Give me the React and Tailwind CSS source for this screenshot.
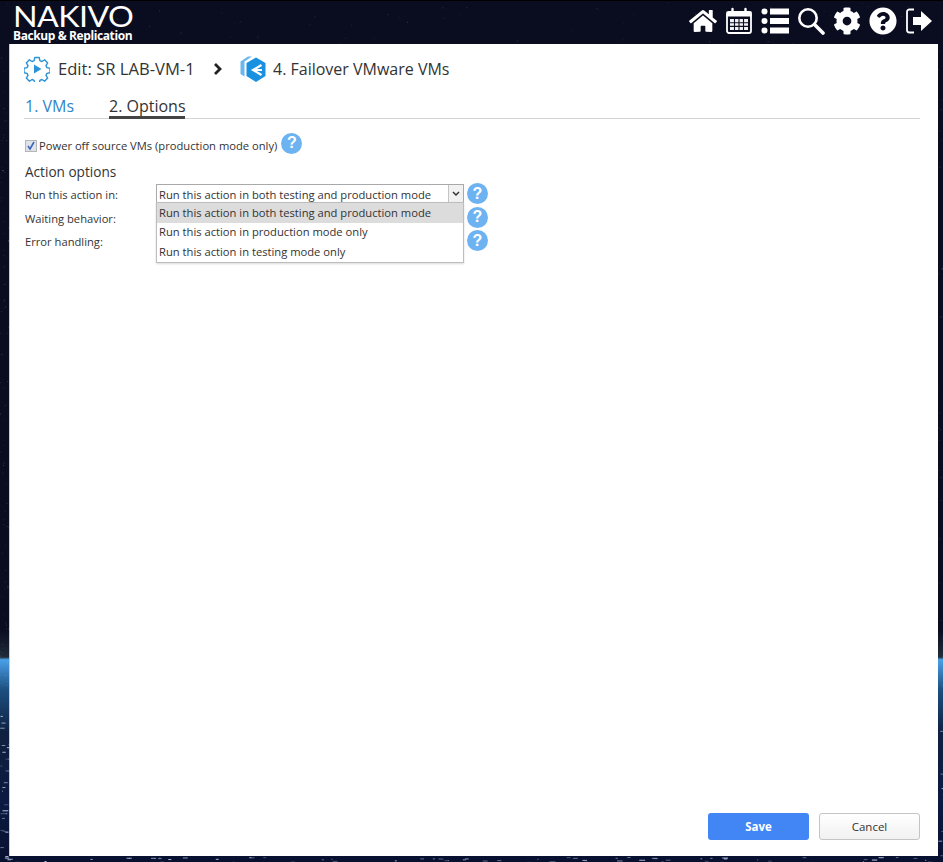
import React from "react";
import { FaHome, FaCog, FaQuestionCircle } from "react-icons/fa";

const font = "font-['Open_Sans','Liberation_Sans',sans-serif]";

function Stars() {
  const pts = [];
  let s = 7;
  const r = () => { s = (s * 9301 + 49297) % 233280; return s / 233280; };
  for (let i = 0; i < 300; i++) {
    const side = r();
    const x = side < 0.35 ? r() * 9 : side < 0.5 ? 938 + r() * 5 : r() * 943;
    const y = side < 0.5 ? 44 + r() * 818 : side < 0.7 ? 1 + r() * 43 : 856 + r() * 6;
    const low = y > 700;
    pts.push({ x, y, w: low ? 1 + r() * 5 : 1, o: low ? 0.25 + r() * 0.6 : 0.08 + r() * 0.15 });
  }
  return (
    <svg className="absolute inset-0" width="943" height="862">
      {pts.map((p, i) => (
        <rect key={i} x={p.x} y={p.y} width={p.w} height="1" fill="#cfe0ff" opacity={p.o} />
      ))}
    </svg>
  );
}

function Help({ className = "" }) {
  return (
    <span className={`flex h-[21px] w-[21px] shrink-0 items-center justify-center rounded-full bg-[#6db3f2] font-['Liberation_Sans',sans-serif] text-[16px] leading-none font-bold text-white ${className}`}>
      ?
    </span>
  );
}

function Calendar() {
  return (
    <svg width="28" height="28" viewBox="0 0 28 28" fill="none" stroke="#fff">
      <rect x="2" y="5" width="24" height="21" rx="2" strokeWidth="1.800" />
      <rect x="2" y="5" width="24" height="4" fill="#fff" strokeWidth="1" />
      <path d="M7.500 2v5M20.500 2v5" strokeWidth="2.400" strokeLinecap="round" />
      <path d="M5 12h18v11H5z" fill="#fff" stroke="none" opacity=".95" />
      <path d="M9.500 12v11M14 12v11M18.500 12v11M5 15.700h18M5 19.400h18" stroke="#0a0c20" strokeWidth="1.100" />
    </svg>
  );
}

function ListIcon() {
  return (
    <svg width="28" height="28" viewBox="0 0 28 28" fill="#fff">
      <circle cx="3.500" cy="4.500" r="3" /><circle cx="3.500" cy="14" r="3" /><circle cx="3.500" cy="23.500" r="3" />
      <rect x="9" y="1.500" width="19" height="6" /><rect x="9" y="11" width="19" height="6" /><rect x="9" y="20.500" width="19" height="6" />
    </svg>
  );
}

function SearchIcon() {
  return (
    <svg width="28" height="28" viewBox="0 0 28 28" fill="none" stroke="#fff">
      <circle cx="11" cy="11" r="8.700" strokeWidth="2.600" />
      <path d="M17.500 17.500L26 26" strokeWidth="3.600" strokeLinecap="round" />
    </svg>
  );
}

function Logout() {
  return (
    <svg width="28" height="28" viewBox="0 0 28 28" fill="none">
      <path d="M9 2.500H4.500A2.500 2.500 0 0 0 2 5v18a2.500 2.500 0 0 0 2.500 2.500H9" stroke="#fff" strokeWidth="1.800" />
      <path d="M8 10h8V4l11 10-11 10v-6H8z" fill="#fff" />
    </svg>
  );
}

function GearPlay() {
  return (
    <svg width="26" height="26" viewBox="0 0 26 26" fill="none">
      <path d="M10.800 1.500h4.400l.7 3.100 2 .9 2.700-1.700 3.100 3.100-1.700 2.700.9 2 3.100.7v4.400l-3.100.7-.9 2 1.700 2.700-3.100 3.100-2.700-1.700-2 .9-.7 3.100h-4.400l-.7-3.100-2-.9-2.700 1.700-3.100-3.100 1.700-2.700-.9-2-3.100-.7v-4.400l3.100-.7.9-2-1.700-2.700 3.100-3.100 2.700 1.700 2-.9z" stroke="#2b93d6" strokeWidth="1.400" strokeLinejoin="round" />
      <path d="M10 8.500l7.500 4.500-7.500 4.500z" fill="#2b93d6" />
    </svg>
  );
}

function Failover() {
  return (
    <svg width="26" height="28" viewBox="0 0 26 28" fill="none">
      <path d="M0.500 6.500L8 1.500h4L4.500 6.500V21.500L0.500 19z" fill="#6ab6ee" />
      <path d="M16 2.500L25.500 8v13L16 27l-9.500-6V8z" fill="#1a90e0" />
      <path d="M21.500 10L13 15l8.500 5M14 15h8" stroke="#fff" strokeWidth="2.200" />
    </svg>
  );
}

function Row({ label, children }) {
  return (
    <div className="flex h-[23.500px] items-center">
      <span className="mt-[4px] w-[131px] text-[11.200px] text-[#333]">{label}</span>
      {children}
    </div>
  );
}

const options = [
  "Run this action in both testing and production mode",
  "Run this action in production mode only",
  "Run this action in testing mode only",
];

export default function App() {
  return (
    <div className={`relative flex h-[862px] w-[943px] flex-col overflow-hidden border-t border-t-black bg-[linear-gradient(180deg,#0a0c20_0%,#0a0c20_73%,#1f2c38_76.200%,#4aa0e8_76.500%,#1d4f80_80%,#0f2040_85%,#0a1a40_93%,#081030_100%)] ${font}`}>
      <Stars />
      <header className="relative flex h-[43px] shrink-0 items-start justify-between pr-[10px] pl-[13px] text-white">
        <div className="flex w-[120px] flex-col pt-[3px]">
          <span className="h-[25px] origin-left scale-x-[1.15] font-['Lato','Open_Sans',sans-serif] text-[28px] leading-[25px] font-normal tracking-[-0.5px] whitespace-nowrap">NAKIVO</span>
          <span className="font-['Open_Sans',sans-serif] text-[12px] leading-[14px] font-bold tracking-[-0.4px] whitespace-nowrap">Backup &amp; Replication</span>
        </div>
        <nav className="flex items-center gap-[8px] pt-[6px]">
          <FaHome size={28} />
          <Calendar />
          <ListIcon />
          <SearchIcon />
          <FaCog size={28} />
          <FaQuestionCircle size={28} />
          <Logout />
        </nav>
      </header>

      <main className="relative mr-[5px] mb-[6px] ml-[9px] flex flex-1 flex-col border-l border-l-[#c9ced6] bg-white pt-[11px] pr-[18px] pb-[16px] pl-[14px] text-[#333]">
        <div className="flex h-[28px] items-center text-[16.600px] text-[#333]">
          <GearPlay />
          <span className="ml-[8px] w-[155px] whitespace-nowrap">Edit: SR LAB-VM-1</span>
          <svg width="10" height="12" viewBox="0 0 10 12" fill="none" stroke="#222" strokeWidth="2.800"><path d="M2 1l5 5-5 5" /></svg>
          <span className="ml-[17px] flex"><Failover /></span>
          <span className="ml-[7px] text-[16px] whitespace-nowrap">4. Failover VMware VMs</span>
        </div>

        <div className="mt-[11px] flex h-[25px] gap-[34px] border-b border-b-[#d4d4d4] text-[16px] leading-[24px]">
          <span className="ml-[1px] h-[24px] w-[50px] whitespace-nowrap text-[#2f86c9]">1. VMs</span>
          <span className="h-[25px] w-[76px] border-b-[3px] border-b-[#444] whitespace-nowrap text-[#333]">2. Options</span>
        </div>

        <div className="mt-[15px] ml-[1px] flex h-[24px] items-center">
          <span className="flex h-[12px] w-[12px] items-center justify-center border border-[#b5b5b5] bg-[#dfe3ec]">
            <svg width="10" height="10" viewBox="0 0 10 10" fill="none" stroke="#3c66b5" strokeWidth="1.600"><path d="M2 5l2 3 4-7" /></svg>
          </span>
          <span className="ml-[2px] text-[11.200px] whitespace-nowrap">Power off source VMs (production mode only)</span>
          <Help className="mt-[-6px] ml-[4px]" />
        </div>

        <h2 className="mt-[4px] ml-[1px] text-[13.600px] leading-[20px] font-normal">Action options</h2>

        <div className="ml-[1px] flex flex-col">
          <Row label="Run this action in:">
            <div className="relative flex h-[19px] w-[308px] items-center border border-[#a9a9a9] bg-white pl-[2px] text-[11.200px]">
              <span className="flex-1 pt-[3px] whitespace-nowrap">{options[0]}</span>
              <span className="flex h-full w-[15px] items-center justify-center border-l border-l-[#c4c4c4] bg-[#f1f1f1]">
                <svg width="8" height="6" viewBox="0 0 8 6" fill="none" stroke="#333" strokeWidth="1.500"><path d="M1 1l3 3 3-3" /></svg>
              </span>
              <div className="absolute top-[17px] left-[-1px] z-10 w-[308px] border border-[#bdbdbd] bg-white shadow-[0_1px_2px_rgba(0,0,0,.15)]">
                {options.map((o, i) => (
                  <div key={o} className={`flex h-[19.500px] items-center pl-[2px] text-[11.200px] whitespace-nowrap ${i === 0 ? "bg-[#dcdcdc]" : ""}`}>{o}</div>
                ))}
              </div>
            </div>
            <Help className="ml-[3px]" />
          </Row>
          <Row label="Waiting behavior:">
            <div className="h-[19px] w-[308px]" />
            <Help className="ml-[3px]" />
          </Row>
          <Row label="Error handling:">
            <div className="h-[19px] w-[308px]" />
            <Help className="ml-[3px]" />
          </Row>
        </div>

        <div className="mt-auto flex justify-end gap-[10px]">
          <button className="h-[27px] w-[101px] rounded-[3px] bg-[#4285f4] text-[11.500px] font-bold text-white">Save</button>
          <button className="h-[27px] w-[101px] rounded-[3px] border border-[#c4c4c4] bg-[linear-gradient(180deg,#ffffff,#f1f1f1)] text-[11.500px] text-[#333]">Cancel</button>
        </div>
      </main>
    </div>
  );
}
